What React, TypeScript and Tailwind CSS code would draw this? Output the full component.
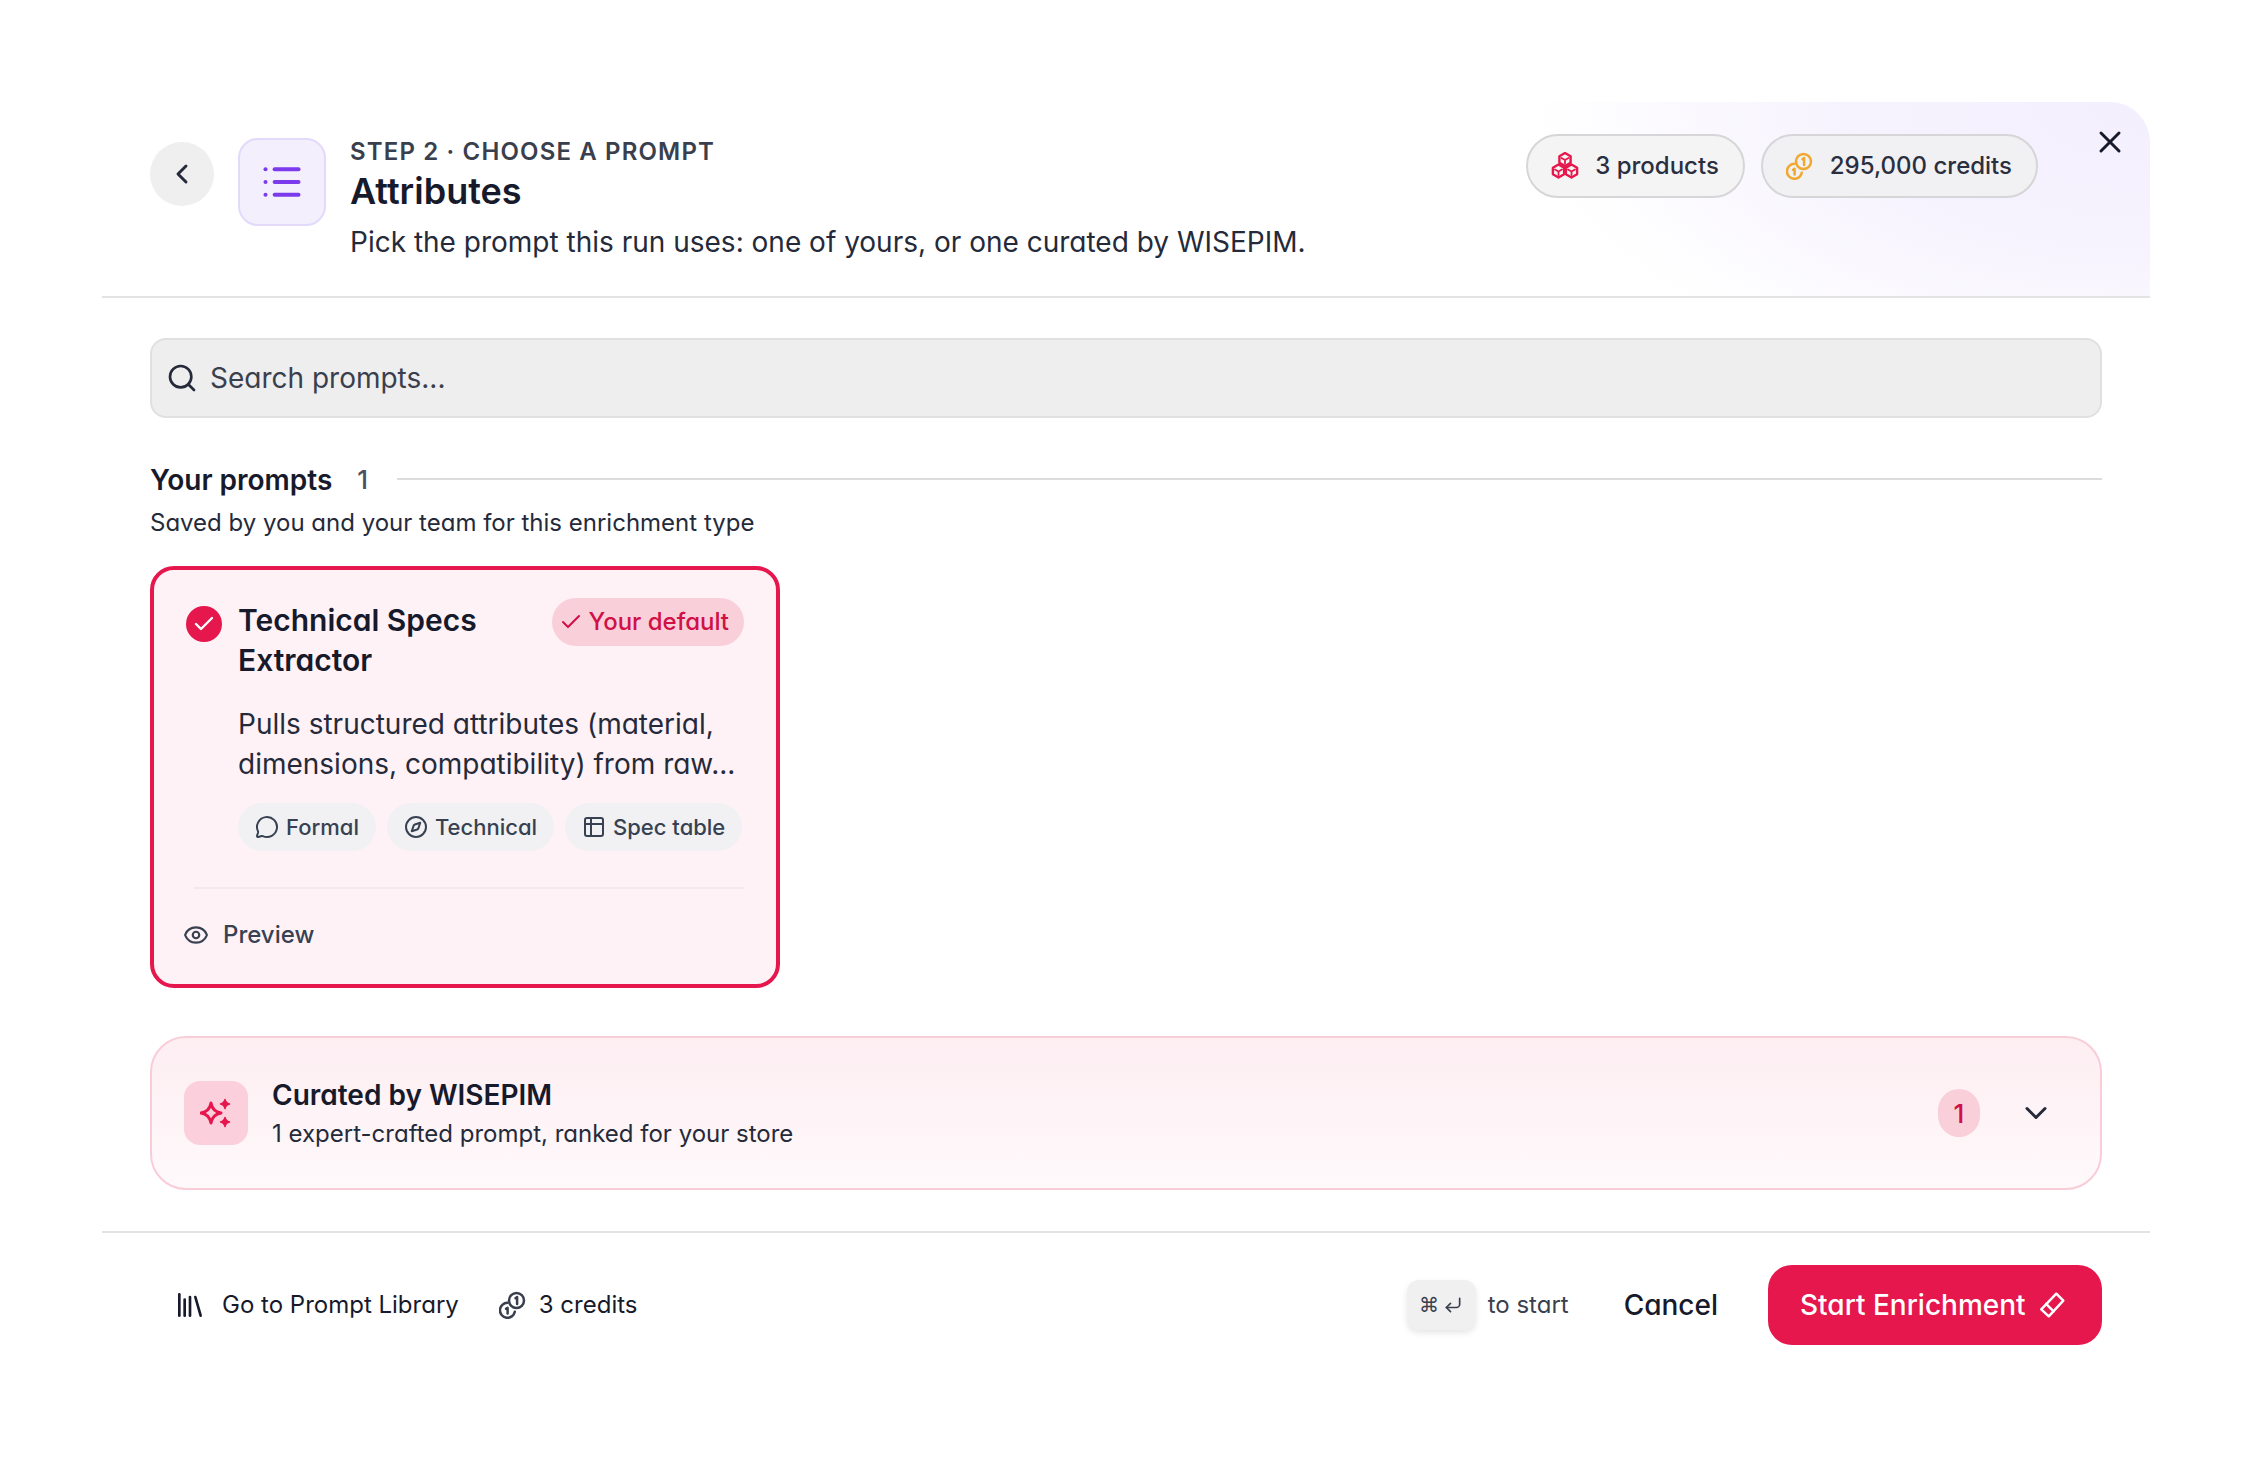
import { Check, ChevronDown, ChevronLeft, Compass, CornerDownLeft, Eye, Library, List, MessageCircle, Search, Table2, X } from "lucide-react";

const FONT = "font-['Inter','Liberation_Sans',sans-serif] [font-feature-settings:'cv11']";

function CubesIcon({ className }: { className?: string }) {
  const centers = [
    [14, 7.5],
    [7.5, 19],
    [20.5, 19],
  ];
  return (
    <svg viewBox="0 0 28 28" fill="none" stroke="currentColor" strokeWidth="2.4" strokeLinejoin="round" strokeLinecap="round" className={className}>
      {centers.map(([x, y]) => (
        <g key={`${x}-${y}`}>
          <path d={`M${x} ${y - 6.5}L${x + 5.6} ${y - 3.25}V${y + 3.25}L${x} ${y + 6.5}L${x - 5.6} ${y + 3.25}V${y - 3.25}Z`} />
          <path d={`M${x - 3.5} ${y - 1.5}L${x} ${y + 0.5}L${x + 3.5} ${y - 1.5}M${x} ${y + 0.5}V${y + 4}`} strokeWidth="1.8" />
        </g>
      ))}
    </svg>
  );
}

function CoinsIcon({ className }: { className?: string }) {
  return (
    <svg viewBox="0 0 28 28" fill="none" stroke="currentColor" strokeWidth="2.5" strokeLinecap="round" strokeLinejoin="round" className={className}>
      <circle cx="17.500" cy="9.500" r="7.500" />
      <path d="M16.500 7.200l1.600-1.200v7" />
      <path d="M8.500 11.800a7.500 7.500 0 1 0 7.300 8.900" />
      <path d="M7 17.800l1.600-1v5.600" />
    </svg>
  );
}

function SparkleIcon({ className }: { className?: string }) {
  return (
    <svg viewBox="0 0 32 32" className={className}>
      <path d="M11 6Q12.500 14.500 21 16Q12.500 17.500 11 26Q9.500 17.500 1 16Q9.500 14.500 11 6Z" fill="none" stroke="currentColor" strokeWidth="3" strokeLinejoin="round" />
      <path d="M25 2.500Q25.800 6.200 29.500 7Q25.800 7.800 25 11.500Q24.200 7.800 20.500 7Q24.200 6.200 25 2.500Z" fill="currentColor" stroke="currentColor" strokeWidth="1.500" strokeLinejoin="round" />
      <path d="M25 20.500Q25.800 24.200 29.500 25Q25.800 25.800 25 29.500Q24.200 25.800 20.500 25Q24.200 24.200 25 20.500Z" fill="currentColor" stroke="currentColor" strokeWidth="1.500" strokeLinejoin="round" />
    </svg>
  );
}

function EraserIcon({ className }: { className?: string }) {
  return (
    <svg viewBox="0 0 26 26" fill="none" stroke="currentColor" strokeWidth="2.300" strokeLinejoin="round" strokeLinecap="round" className={className}>
      <path d="M17 2.500l6.500 6.500L10 23.500 3 17z" />
      <path d="M7.500 12l7 7" />
    </svg>
  );
}

function Tag({ icon, label }: { icon: React.ReactNode; label: string }) {
  return (
    <span className="flex h-12 items-center gap-[7px] whitespace-nowrap rounded-full bg-[#f1f1f3] px-[17px] text-[22px] font-medium text-[#374151]">
      {icon}
      {label}
    </span>
  );
}

export default function App() {
  return (
    <div className={`${FONT} flex h-[1480px] justify-center bg-white pt-[102px] text-[#171a2b]`}>
      <div className="flex h-[1275px] w-[2048px] flex-col">
        {/* Header */}
        <div className="flex h-[196px] shrink-0 items-start rounded-tr-[40px] border-b-2 border-[#e3e3e5] bg-[radial-gradient(ellipse_620px_300px_at_100%_0%,#f3effd_0%,#f6f2fe_45%,#ffffff_100%)] pl-12 pr-[22px]">
          <button className="mt-10 flex h-16 w-16 items-center justify-center rounded-full bg-[#efefef]">
            <ChevronLeft className="h-8 w-8 text-[#252a3a]" strokeWidth={2.2} />
          </button>
          <div className="ml-6 mt-9 flex h-[88px] w-[88px] items-center justify-center rounded-[20px] border-2 border-[#e3dafb] bg-[#f3effd]">
            <List className="h-11 w-11 text-[#7c3aed]" strokeWidth={2.2} />
          </div>
          <div className="ml-6 mt-9 flex-1">
            <p className="text-[24px] font-semibold uppercase leading-7 tracking-[1.15px] text-[#3a3f4e]">Step 2 · Choose a prompt</p>
            <h1 className="mt-[3px] text-[36px] font-semibold leading-[44px]">Attributes</h1>
            <p className="mt-[9px] text-[28px] leading-10 text-[#252a3a]">Pick the prompt this run uses: one of yours, or one curated by WISEPIM.</p>
          </div>
          <div className="mt-8 flex items-center gap-4">
            <span className="flex h-16 items-center gap-4 rounded-full border-2 border-[#d6d6d9] bg-[#f4f4f5] pl-[23px] pr-6 text-[24px] font-medium text-[#2a2f3f]">
              <CubesIcon className="h-7 w-7 text-[#e5174d]" />
              3 products
            </span>
            <span className="flex h-16 items-center gap-4 rounded-full border-2 border-[#d6d6d9] bg-[#f1f0f3] pl-[23px] pr-6 text-[24px] font-medium text-[#2a2f3f]">
              <CoinsIcon className="h-7 w-7 text-[#f0a92e]" />
              295,000 credits
            </span>
          </div>
          <button className="ml-[54px] mt-[22px]">
            <X className="h-9 w-9 text-[#171a2b]" strokeWidth={2} />
          </button>
        </div>

        {/* Body */}
        <div className="flex flex-1 flex-col px-12 pt-[40px]">
          <div className="flex h-20 items-center gap-[12px] rounded-2xl border-2 border-[#e0e0e0] bg-[#eeeeee] px-[14px] text-[28px] text-[#3a3f4e]">
            <Search className="h-8 w-8 text-[#252a3a]" strokeWidth={2} />
            Search prompts...
          </div>

          <div className="mt-[44px] flex items-center">
            <h2 className="text-[28px] font-semibold leading-9">Your prompts</h2>
            <span className="ml-[25px] text-[26px] font-medium leading-9 text-[#4b5060]">1</span>
            <div className="mb-[2px] ml-[29px] h-[2px] flex-1 bg-[#dcdcde]" />
          </div>
          <p className="mt-[7px] text-[24px] leading-9 text-[#252a3a]">Saved by you and your team for this enrichment type</p>

          <div className="mt-[25px] h-[422px] w-[630px] rounded-3xl border-4 border-[#e5174d] bg-[#fef2f7] pl-8 pr-8 pt-[28px]">
            <div className="flex items-start">
              <span className="mt-2 flex h-9 w-9 shrink-0 items-center justify-center rounded-full bg-[#e5174d]">
                <Check className="h-6 w-6 text-white" strokeWidth={2.4} />
              </span>
              <h3 className="ml-4 w-[270px] pt-[2px] text-[30px] font-semibold leading-10">Technical Specs Extractor</h3>
              <span className="ml-auto flex h-12 items-center gap-[6px] whitespace-nowrap rounded-full bg-[#f9cfd9] pl-[7px] pr-[15px] text-[24px] font-medium text-[#d01047]">
                <Check className="h-6 w-6" strokeWidth={2} />
                Your default
              </span>
            </div>
            <p className="ml-[52px] mt-[24px] text-[28px] leading-10 text-[#252a3a]">
              Pulls structured attributes (material, dimensions, compatibility) from raw...
            </p>
            <div className="ml-[52px] mt-[19px] flex gap-[11px]">
              <Tag icon={<MessageCircle className="h-6 w-6" strokeWidth={2} />} label="Formal" />
              <Tag icon={<Compass className="h-6 w-6" strokeWidth={2} />} label="Technical" />
              <Tag icon={<Table2 className="h-6 w-6" strokeWidth={2} />} label="Spec table" />
            </div>
            <div className="ml-2 mt-9 h-[2px] bg-[#f4e8ed]" />
            <div className="-ml-[3px] mt-[28px] flex items-center gap-[14px] text-[24px] font-medium text-[#374151]">
              <Eye className="h-[26px] w-[26px]" strokeWidth={2} />
              Preview
            </div>
          </div>

          <div className="mt-[48px] flex h-[154px] items-center rounded-[36px] border-2 border-[#f9cdd8] bg-gradient-to-b from-[#fdeef2] to-[#fff9fb] pl-8 pr-[46px]">
            <div className="flex h-16 w-16 items-center justify-center rounded-2xl bg-[#fbd0dc]">
              <SparkleIcon className="h-8 w-8 text-[#e5174d]" />
            </div>
            <div className="ml-6 flex-1">
              <p className="text-[28px] font-semibold leading-10">Curated by WISEPIM</p>
              <p className="mt-px text-[24px] leading-9 text-[#252a3a]">1 expert-crafted prompt, ranked for your store</p>
            </div>
            <span className="flex h-12 w-[42px] items-center justify-center rounded-full bg-[#f9cfd9] text-[26px] font-medium text-[#d01047]">1</span>
            <ChevronDown className="ml-[38px] h-9 w-9 text-[#252a3a]" strokeWidth={2} />
          </div>
        </div>

        {/* Footer */}
        <div className="flex h-[146px] shrink-0 items-center border-t-2 border-[#e3e3e5] pl-[72px] pr-12">
          <Library className="h-8 w-8" strokeWidth={2} />
          <span className="ml-[16px] text-[24px]">Go to Prompt Library</span>
          <CoinsIcon className="ml-10 h-7 w-7 text-[#3a3f4e]" />
          <span className="ml-3 text-[24px]">3 credits</span>
          <kbd className="ml-auto flex h-[50px] w-[69px] items-center justify-center gap-1 rounded-xl bg-[#f0f0f1] font-['Liberation_Sans',sans-serif] text-[20px] text-[#3a3f4e] shadow-[0_3px_6px_rgba(0,0,0,0.1)]">
            ⌘
            <CornerDownLeft className="h-5 w-5" strokeWidth={2} />
          </kbd>
          <span className="ml-3 text-[24px] text-[#3a3f4e]">to start</span>
          <button className="ml-[55px] text-[28px] font-medium">Cancel</button>
          <button className="ml-[50px] flex h-20 w-[334px] items-center gap-[12px] rounded-3xl bg-[#e5174d] pl-8 text-[28px] font-medium text-white">
            Start Enrichment
            <EraserIcon className="h-7 w-7" />
          </button>
        </div>
      </div>
    </div>
  );
}
